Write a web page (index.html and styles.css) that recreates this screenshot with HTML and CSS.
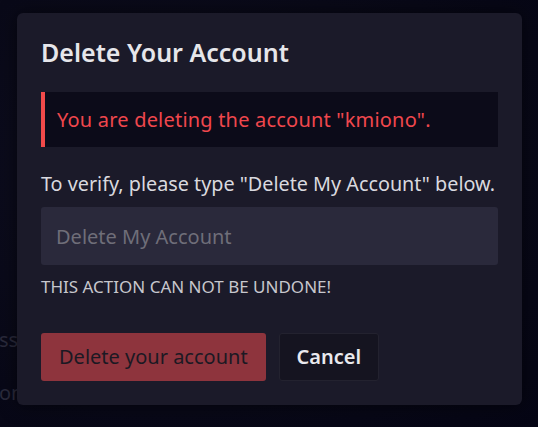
FILE: index.html
```html
<!DOCTYPE html>
<html lang="en">
<head>
<meta charset="utf-8">
<title>Delete Your Account</title>
<link rel="stylesheet" href="styles.css">
</head>
<body>
<div class="page">
  <div class="bg-line first">ss</div>
  <div class="bg-line">on</div>
</div>
<div class="overlay">
  <div class="dialog">
    <h1 class="title">Delete Your Account</h1>
    <div class="alert">You are deleting the account "kmiono".</div>
    <p class="prompt">To verify, please type "Delete My Account" below.</p>
    <input class="field" type="text" placeholder="Delete My Account">
    <p class="warning">THIS ACTION CAN NOT BE UNDONE!</p>
    <div class="actions">
      <button class="btn btn-danger">Delete your account</button>
      <button class="btn btn-cancel">Cancel</button>
    </div>
  </div>
</div>
</body>
</html>
```

FILE: styles.css
```css
* { box-sizing: border-box; }
html, body { margin: 0; height: 100%; }
body {
  background: radial-gradient(ellipse at 30% 40%, #0d0d1f 0%, #090918 55%, #050514 100%);
  font-family: "Noto Sans", sans-serif;
  overflow: hidden;
}
.page {
  padding-top: 328px;
  color: #2a2a3b;
  font-size: 20px;
  line-height: 24px;
}
.bg-line { margin-left: -1px; }
.bg-line + .bg-line { margin-top: 29px; }
.overlay { position: absolute; inset: 0; }
.dialog {
  position: absolute;
  left: 17px;
  top: 13px;
  width: 505px;
  background: #1b1a29;
  border-radius: 6px;
  padding: 23px 24px 24px;
  box-shadow: 0 0 18px rgba(0, 0, 0, 0.55);
  display: flex;
  flex-direction: column;
}
.title {
  margin: 0;
  font-size: 25px;
  line-height: 32px;
  font-weight: 600;
  color: #e6e6ea;
}
.alert {
  margin-top: 24px;
  background: #0c0b19;
  border-left: 4px solid #f24a4a;
  padding: 16px 12px 15px;
  color: #f0474d;
  font-size: 20px;
  line-height: 24px;
  letter-spacing: 0.2px;
}
.prompt {
  margin: 25px 0 0;
  color: #d9d9df;
  font-size: 19.8px;
  line-height: 24px;
  white-space: nowrap;
}
.field {
  margin-top: 11px;
  height: 58px;
  width: 100%;
  border: none;
  border-radius: 3px;
  background: #2a293b;
  padding: 0 15px;
  font-family: inherit;
  font-size: 20px;
  color: #d9d9df;
  outline: none;
}
.field::placeholder { color: #6f6e79; }
.warning {
  margin: 12px 0 0;
  color: #c7c7cd;
  font-size: 17px;
  line-height: 20px;
}
.actions {
  margin-top: 36px;
  display: flex;
  gap: 13px;
}
.btn {
  height: 48px;
  border-radius: 3px;
  padding: 0 18px;
  font-family: inherit;
  font-size: 20px;
  line-height: 24px;
  cursor: pointer;
}
.btn-danger {
  background: #8e343d;
  border: none;
  color: #1b1923;
}
.btn-cancel {
  background: #151420;
  border: 1px solid #23222f;
  color: #e9e9ee;
  font-weight: 600;
  padding: 0 17px;
}
```
